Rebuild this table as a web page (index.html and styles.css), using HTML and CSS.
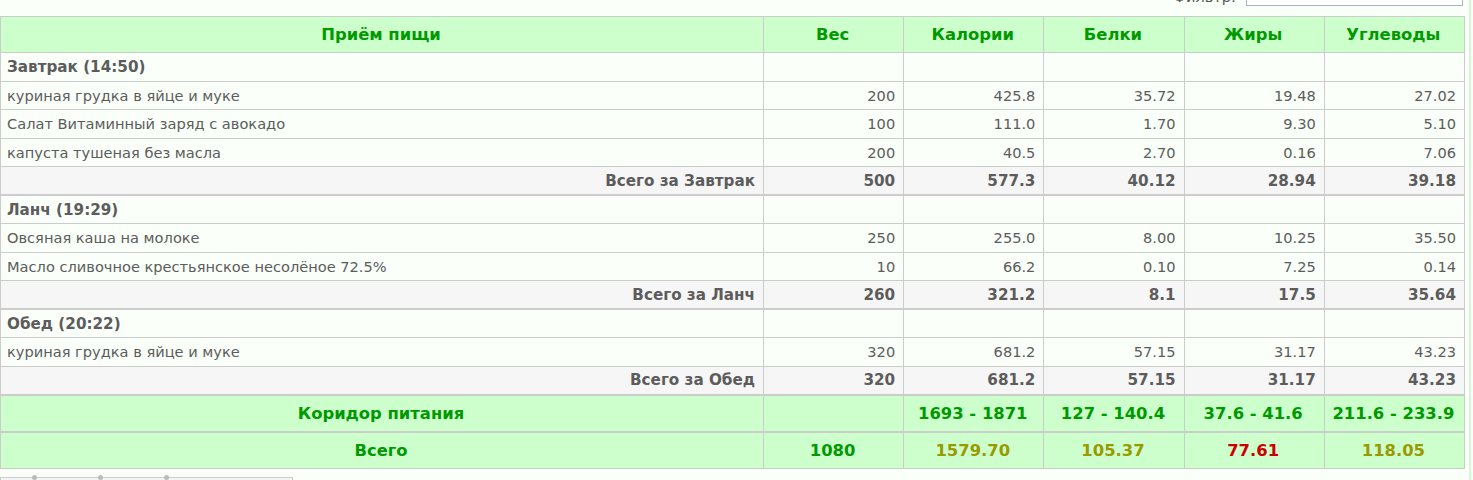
FILE: index.html
```html
<!DOCTYPE html>
<html lang="ru">
<head>
<meta charset="utf-8">
<link rel="stylesheet" href="styles.css">
</head>
<body>
<div class="page">
  <div class="filter">
    <label class="filter-label">Фильтр:</label>
    <input class="filter-input" type="text">
  </div>
  <table class="diary">
    <thead>
      <tr>
        <th class="c-name">Приём пищи</th>
        <th>Вес</th>
        <th>Калории</th>
        <th>Белки</th>
        <th>Жиры</th>
        <th>Углеводы</th>
      </tr>
    </thead>
    <tbody>
      <tr class="meal"><td>Завтрак (14:50)</td><td></td><td></td><td></td><td></td><td></td></tr>
      <tr><td>куриная грудка в яйце и муке</td><td>200</td><td>425.8</td><td>35.72</td><td>19.48</td><td>27.02</td></tr>
      <tr><td>Салат Витаминный заряд с авокадо</td><td>100</td><td>111.0</td><td>1.70</td><td>9.30</td><td>5.10</td></tr>
      <tr><td>капуста тушеная без масла</td><td>200</td><td>40.5</td><td>2.70</td><td>0.16</td><td>7.06</td></tr>
      <tr class="sum"><td>Всего за Завтрак</td><td>500</td><td>577.3</td><td>40.12</td><td>28.94</td><td>39.18</td></tr>
      <tr class="meal"><td>Ланч (19:29)</td><td></td><td></td><td></td><td></td><td></td></tr>
      <tr><td>Овсяная каша на молоке</td><td>250</td><td>255.0</td><td>8.00</td><td>10.25</td><td>35.50</td></tr>
      <tr><td>Масло сливочное крестьянское несолёное 72.5%</td><td>10</td><td>66.2</td><td>0.10</td><td>7.25</td><td>0.14</td></tr>
      <tr class="sum"><td>Всего за Ланч</td><td>260</td><td>321.2</td><td>8.1</td><td>17.5</td><td>35.64</td></tr>
      <tr class="meal"><td>Обед (20:22)</td><td></td><td></td><td></td><td></td><td></td></tr>
      <tr><td>куриная грудка в яйце и муке</td><td>320</td><td>681.2</td><td>57.15</td><td>31.17</td><td>43.23</td></tr>
      <tr class="sum"><td>Всего за Обед</td><td>320</td><td>681.2</td><td>57.15</td><td>31.17</td><td>43.23</td></tr>
    </tbody>
    <tfoot>
      <tr class="corridor"><td>Коридор питания</td><td></td><td>1693 - 1871</td><td>127 - 140.4</td><td>37.6 - 41.6</td><td>211.6 - 233.9</td></tr>
      <tr class="total"><td>Всего</td><td class="ok">1080</td><td class="low">1579.70</td><td class="low">105.37</td><td class="high">77.61</td><td class="low">118.05</td></tr>
    </tfoot>
  </table>
  <div class="pager">
    <span class="dot"></span><span class="dot"></span><span class="dot"></span>
  </div>
</div>
</body>
</html>
```

FILE: styles.css
```css
html, body {
  margin: 0;
  padding: 0;
  background: #fafffa;
  font-family: "DejaVu Sans", Verdana, sans-serif;
  font-size: 14.6px;
  color: #5c5c5c;
}

.page {
  width: 1469px;
  border-right: 2px solid #d8f5d8;
  min-height: 480px;
  overflow: hidden;
}

.filter {
  display: flex;
  justify-content: flex-end;
  align-items: center;
  gap: 10px;
  height: 22px;
  margin-top: -15px;
  padding-right: 6px;
  margin-bottom: 9px;
}

.filter-label {
  color: #555;
  font-size: 14.6px;
}

.filter-input {
  width: 211px;
  height: 18px;
  border: 1px solid #aab4c4;
  background: #fff;
  padding: 0 2px;
  margin: 0;
}

.diary {
  width: 1465px;
  border-collapse: collapse;
  table-layout: fixed;
}

.diary th,
.diary td {
  border: 1px solid #cccccc;
  padding: 0 8px 0 6px;
  white-space: nowrap;
}

.diary th {
  background: #ccffcc;
  color: #009900;
  font-weight: bold;
  font-size: 16.4px;
  height: 35px;
  text-align: center;
}

.diary th:first-child { width: 748px; }

.diary tbody tr { height: 28.5px; }

.diary tbody td { text-align: right; }
.diary tbody td:first-child { text-align: left; }

.diary tr.meal td { font-weight: bold; font-size: 15.2px; }

.diary tr.sum td {
  background: #f6f6f6;
  font-weight: bold;
  font-size: 15.2px;
}
.diary tr.sum td:first-child { text-align: right; }
.diary tr.sum td { border-bottom: 2px solid #cccccc; }

.diary tfoot td {
  background: #ccffcc;
  color: #009900;
  font-weight: bold;
  font-size: 16.4px;
  text-align: center;
  height: 35px;
}

.diary tfoot tr.corridor td { border-bottom: 2px solid #cccccc; }

.diary .low { color: #999900; }
.diary .high { color: #cc0000; }
.diary .ok { color: #009900; }

.pager {
  margin-top: 8px;
  width: 293px;
  height: 20px;
  border: 1px solid #cccccc;
  background: #f4f4f4;
  display: flex;
  gap: 61px;
  padding-left: 31px;
  box-sizing: border-box;
}

.dot {
  width: 5px;
  height: 5px;
  border-radius: 50%;
  background: #bbbbbb;
  margin-top: -3px;
}
```
